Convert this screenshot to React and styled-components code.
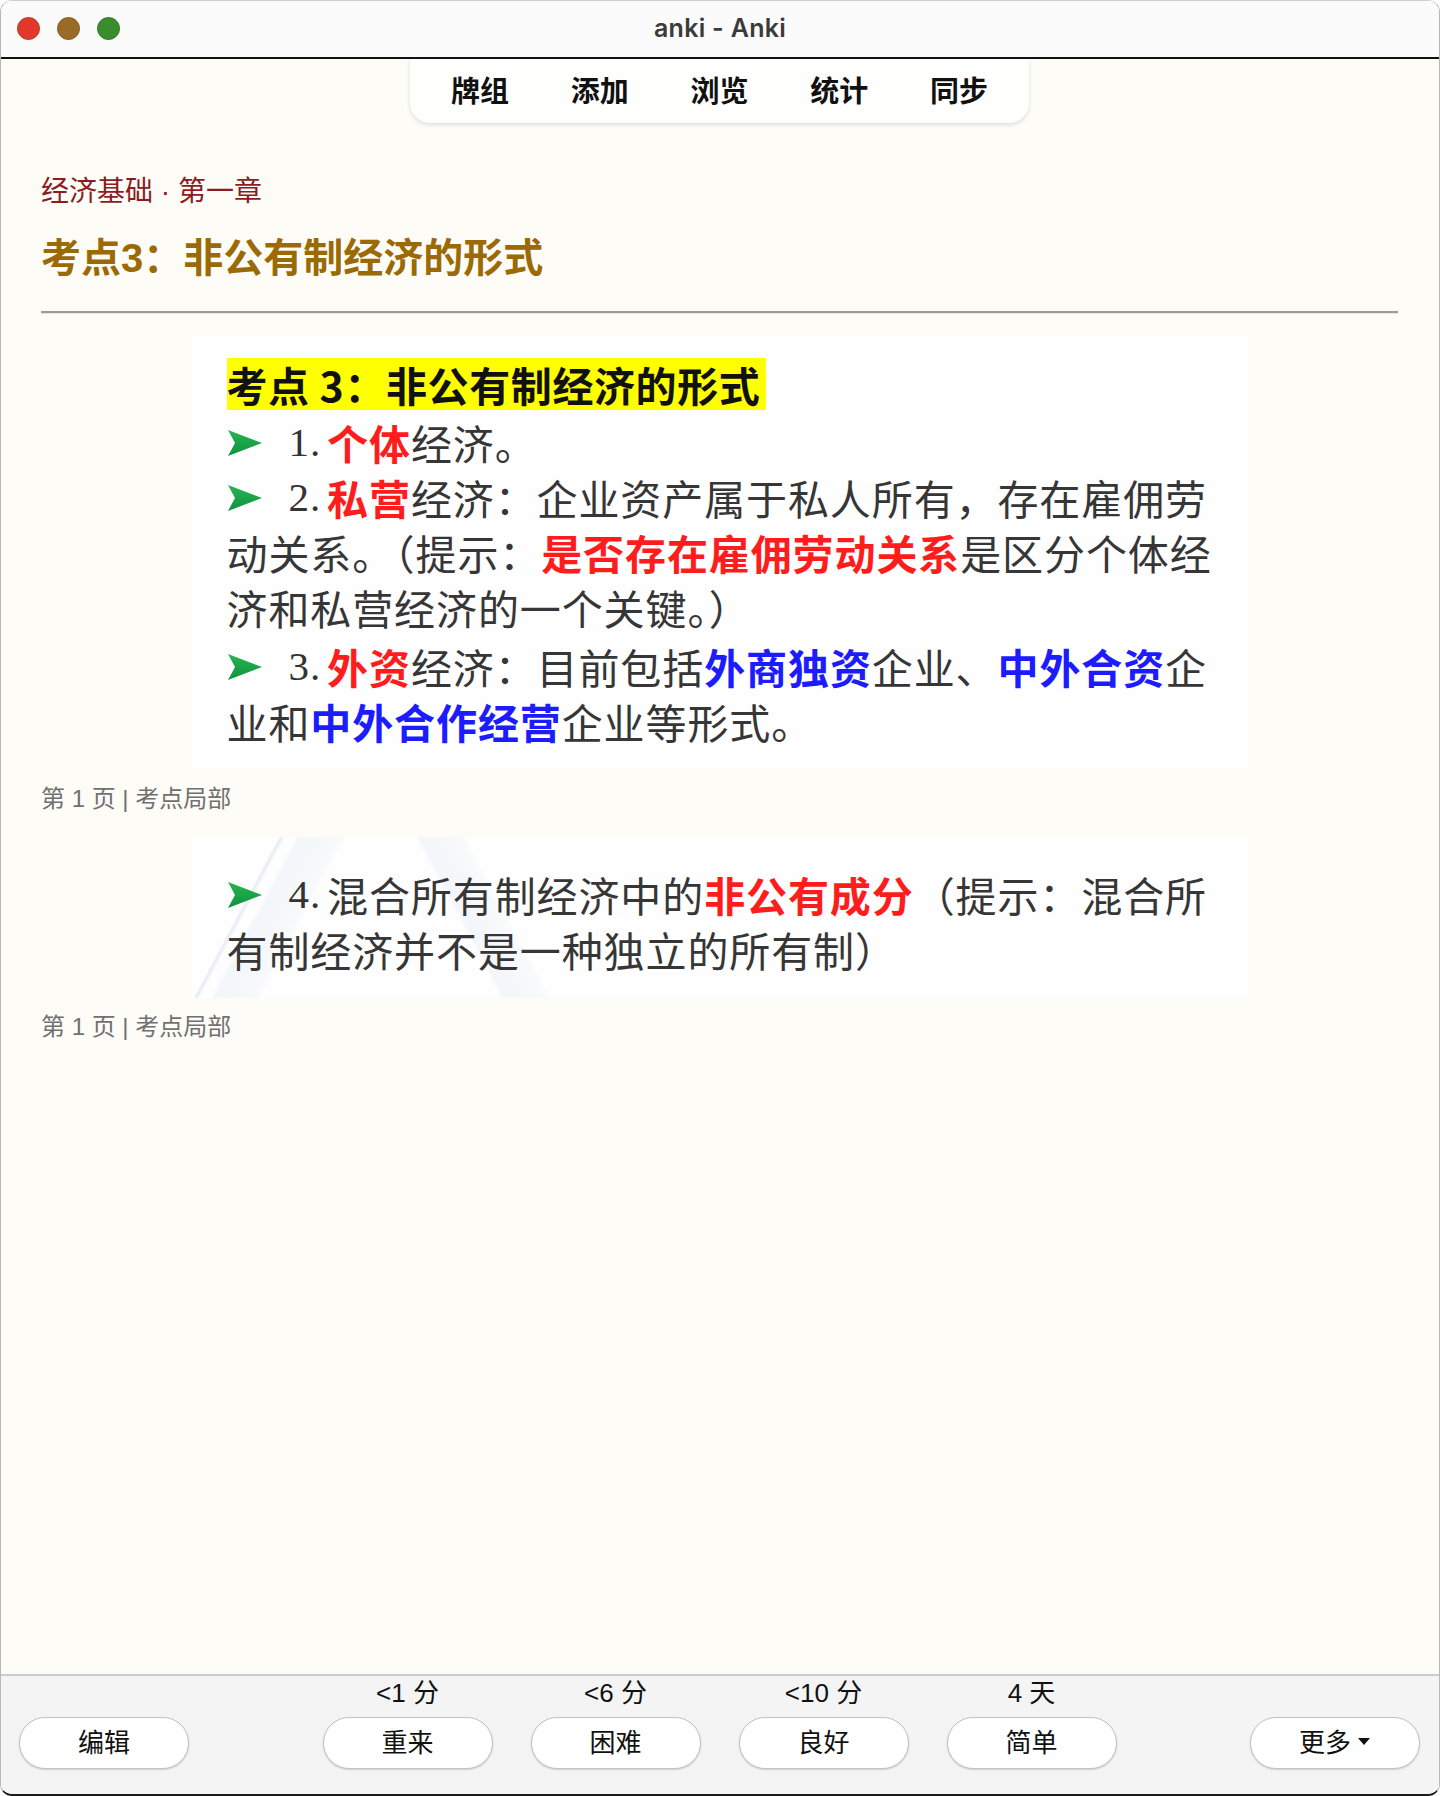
import React from 'react'
import styled, { createGlobalStyle } from 'styled-components'

const GlobalStyle = createGlobalStyle`
    html, body {
        margin: 0;
        padding: 0;
        background: #ffffff;
    }
    * {
        box-sizing: border-box;
    }
`;

const CJK = `"Noto Sans CJK SC", "Noto Sans", sans-serif`;
const SLIDE_FONT = `"Liberation Serif", "Noto Sans CJK SC", serif`;

const Window = styled.div`
    width: 1440px;
    height: 1796px;
    display: flex;
    flex-direction: column;
    border-radius: 12px;
    overflow: hidden;
    border-top: 1px solid #d0d0d0;
    border-left: 1px solid #b8b8b8;
    border-right: 1px solid #b8b8b8;
    border-bottom: 2px solid #1c1c1c;
    background: #fdfcf7;
`;

const TitleBar = styled.div`
    height: 58px;
    flex-shrink: 0;
    position: relative;
    display: flex;
    align-items: center;
    justify-content: center;
    background: #fbfbfb;
    border-bottom: 2px solid #111;
`;

const Lights = styled.div`
    position: absolute;
    left: 16px;
    top: 16px;
    display: flex;
    gap: 17px;
`;

const Light = styled.span`
    width: 23px;
    height: 23px;
    border-radius: 50%;
    background: ${p => p.color};
    border: 1px solid ${p => p.edge};
`;

const WindowTitle = styled.div`
    font-family: "Inter", "Liberation Sans", sans-serif;
    font-weight: 600;
    font-size: 25px;
    color: #3a3a3a;
    letter-spacing: 0.3px;
    margin-top: -3px;
`;

const Main = styled.div`
    flex: 1;
    display: flex;
    flex-direction: column;
    padding: 0 41px 0 40px;
`;

const TabBar = styled.div`
    align-self: center;
    width: 619px;
    height: 64px;
    padding: 0 10px;
    display: flex;
    align-items: center;
    background: #fefefd;
    border-radius: 0 0 20px 20px;
    box-shadow: 0 2px 4px rgba(0, 0, 0, 0.12);
`;

const Tab = styled.div`
    width: 120px;
    text-align: center;
    font-family: ${CJK};
    font-weight: 700;
    font-size: 29px;
    color: #111;
    margin-top: -5px;
`;

const DeckLabel = styled.div`
    margin-top: 51px;
    font-family: "Liberation Sans", ${CJK};
    font-size: 28px;
    line-height: 36px;
    color: #8b1c1f;
`;

const Heading = styled.h1`
    margin: 22px 0 0;
    font-family: "Liberation Sans", ${CJK};
    font-weight: 700;
    font-size: 40px;
    line-height: 52px;
    color: #9b6a04;
`;

const Rule = styled.div`
    margin-top: 27px;
    border-top: 2px solid #9b9b9b;
    border-bottom: 1px solid #e6e6e4;
`;

const Slide = styled.div`
    align-self: center;
    width: 1056px;
    margin-top: ${p => p.gap}px;
    padding: ${p => p.top}px 0 ${p => p.bottom}px 35px;
    background: #fefefe;
    font-family: ${SLIDE_FONT};
    font-size: 41px;
    letter-spacing: 0.9px;
    color: #333;
    white-space: nowrap;
    ${p => p.watermark && `
        background:
            linear-gradient(118deg, transparent 7.6%, rgba(205, 218, 232, 0.5) 7.8%, transparent 8.2%),
            linear-gradient(118deg, transparent 9%, rgba(236, 241, 247, 0.6) 9.5%, rgba(240, 244, 249, 0.5) 13%, transparent 13.5%),
            linear-gradient(62deg, transparent 27%, rgba(238, 242, 248, 0.7) 27.5%, rgba(241, 245, 249, 0.5) 31%, transparent 31.5%),
            #fefefe;
    `}
`;

const Banner = styled.div`
    display: inline-block;
    height: 52px;
    line-height: 52px;
    padding: 0 6px 0 0;
    background: #ffff00;
    font-family: ${CJK};
    font-weight: 700;
    letter-spacing: 0.6px;
    color: #111;
    margin-bottom: 5px;
`;

const Line = styled.div`
    height: 55px;
    line-height: 55px;
    display: flex;
    align-items: center;
    margin-top: ${p => p.gap || 0}px;
`;

const Num = styled.span`
    margin-right: 6px;
    color: #333;
`;

const Mark = styled.span`
    font-family: ${CJK};
    font-weight: 700;
    color: ${p => (p.tone === 'blue' ? '#1c1cff' : '#ff1c1c')};
`;

const Body = styled.span`
    font-family: ${CJK};
    font-weight: 400;
    color: #363636;
`;

const Caption = styled.div`
    margin-top: ${p => p.gap}px;
    font-family: "Liberation Sans", ${CJK};
    font-size: 24px;
    line-height: 32px;
    color: #707070;
`;

const BottomBar = styled.div`
    height: 120px;
    flex-shrink: 0;
    display: flex;
    align-items: flex-end;
    justify-content: space-between;
    padding: 0 19px 25px 18px;
    background: #f4f4f4;
    border-top: 2px solid #cbcbcb;
`;

const AnswerGroup = styled.div`
    display: flex;
    gap: 38px;
`;

const Answer = styled.div`
    display: flex;
    flex-direction: column;
    align-items: center;
    gap: 10px;
`;

const Due = styled.div`
    font-family: "Liberation Sans", ${CJK};
    font-size: 26px;
    line-height: 28px;
    color: #111;
`;

const Button = styled.button`
    width: 170px;
    height: 52px;
    border-radius: 26px;
    background: #ffffff;
    border: 1.5px solid #c2c2c2;
    box-shadow: 0 1px 2px rgba(0, 0, 0, 0.15);
    font-family: "Liberation Sans", ${CJK};
    font-size: 26px;
    color: #111;
    display: flex;
    align-items: center;
    justify-content: center;
    gap: 6px;
    padding: 0 0 5px;
    cursor: pointer;
`;

// 绿色箭头
const Arrow = () => (
    <svg width="36" height="30" viewBox="0 0 36 30" style={{ marginRight: 26, flexShrink: 0 }}>
        <defs>
            <linearGradient id="arrowFill" x1="0" y1="0" x2="0" y2="1">
                <stop offset="0" stopColor="#27b552" />
                <stop offset="1" stopColor="#0f923e" />
            </linearGradient>
        </defs>
        <path d="M1 2 L35 15 L1 28 L8 15 Z" fill="url(#arrowFill)" />
    </svg>
);

const Caret = () => (
    <svg width="14" height="10" viewBox="0 0 14 10">
        <path d="M1 2 L13 2 L7 9 Z" fill="#111" />
    </svg>
);

const tabs = ['牌组', '添加', '浏览', '统计', '同步'];

const answers = [
    { due: '<1 分', label: '重来' },
    { due: '<6 分', label: '困难' },
    { due: '<10 分', label: '良好' },
    { due: '4 天', label: '简单' },
];

export default function App() {
    return (
        <>
            <GlobalStyle />
            <Window>
                <TitleBar>
                    <Lights>
                        <Light color="#e0392c" edge="#c62f24" />
                        <Light color="#9a6b27" edge="#855a1e" />
                        <Light color="#3b8c2c" edge="#2f7624" />
                    </Lights>
                    <WindowTitle>anki - Anki</WindowTitle>
                </TitleBar>

                <Main>
                    <TabBar>
                        {tabs.map(t => <Tab key={t}>{t}</Tab>)}
                    </TabBar>

                    <DeckLabel>经济基础 · 第一章</DeckLabel>
                    <Heading>考点3：非公有制经济的形式</Heading>
                    <Rule />

                    <Slide gap={22} top={22} bottom={20}>
                        <Banner>考点 3：非公有制经济的形式</Banner>
                        <Line>
                            <Arrow /><Num>1.</Num><Mark>个体</Mark><Body>经济。</Body>
                        </Line>
                        <Line>
                            <Arrow /><Num>2.</Num><Mark>私营</Mark><Body>经济：企业资产属于私人所有，存在雇佣劳</Body>
                        </Line>
                        <Line>
                            <Body>动关系。（提示：</Body><Mark>是否存在雇佣劳动关系</Mark><Body>是区分个体经</Body>
                        </Line>
                        <Line>
                            <Body>济和私营经济的一个关键。）</Body>
                        </Line>
                        <Line gap={4}>
                            <Arrow /><Num>3.</Num><Mark>外资</Mark><Body>经济：目前包括</Body><Mark tone="blue">外商独资</Mark><Body>企业、</Body><Mark tone="blue">中外合资</Mark><Body>企</Body>
                        </Line>
                        <Line>
                            <Body>业和</Body><Mark tone="blue">中外合作经营</Mark><Body>企业等形式。</Body>
                        </Line>
                    </Slide>
                    <Caption gap={14}>第 1 页 | 考点局部</Caption>

                    <Slide gap={22} top={30} bottom={21} watermark>
                        <Line>
                            <Arrow /><Num>4.</Num><Body>混合所有制经济中的</Body><Mark>非公有成分</Mark><Body>（提示：混合所</Body>
                        </Line>
                        <Line>
                            <Body>有制经济并不是一种独立的所有制）</Body>
                        </Line>
                    </Slide>
                    <Caption gap={13}>第 1 页 | 考点局部</Caption>
                </Main>

                <BottomBar>
                    <Button>编辑</Button>
                    <AnswerGroup>
                        {answers.map(a => (
                            <Answer key={a.label}>
                                <Due>{a.due}</Due>
                                <Button>{a.label}</Button>
                            </Answer>
                        ))}
                    </AnswerGroup>
                    <Button>更多<Caret /></Button>
                </BottomBar>
            </Window>
        </>
    )
}
